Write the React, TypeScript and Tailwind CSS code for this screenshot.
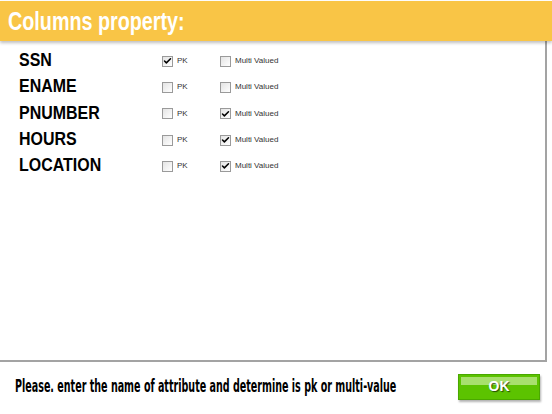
import { Check } from 'lucide-react';

type Column = { name: string; pk: boolean; multi: boolean };

const columns: Column[] = [
  { name: 'SSN', pk: true, multi: false },
  { name: 'ENAME', pk: false, multi: false },
  { name: 'PNUMBER', pk: false, multi: true },
  { name: 'HOURS', pk: false, multi: true },
  { name: 'LOCATION', pk: false, multi: true },
];

function Box({ checked }: { checked: boolean }) {
  return (
    <div className="w-[11px] h-[11px] border border-[#9a9a9a] bg-gradient-to-br from-[#e4e4e4] to-white flex items-center justify-center">
      {checked && <Check className="w-[10px] h-[10px] text-black" strokeWidth={4} />}
    </div>
  );
}

export default function App() {
  return (
    <div className="w-[552px] h-[414px] bg-white flex flex-col overflow-hidden font-['Liberation_Sans',Arial,sans-serif]">
      {/* Header */}
      <div className="mt-px h-[40px] shrink-0 bg-[#f9c546] flex items-center pl-[8px] shadow-[0_2px_3px_rgba(0,0,0,0.25)] relative z-10">
        <span className="inline-block origin-left scale-x-[0.79] whitespace-nowrap text-white font-bold text-[25px] leading-none">
          Columns property:
        </span>
      </div>

      {/* Columns panel */}
      <div className="h-[321px] shrink-0 w-[547px] border-r-2 border-b-2 border-[#a3a3a3] bg-white pt-[7px] pl-[19px] flex flex-col">
        {columns.map((c) => (
          <div key={c.name} className="h-[26.3px] flex items-center">
            <div className="w-[143px]">
              <span className="inline-block origin-left scale-x-[0.84] text-[19px] font-bold text-black leading-none whitespace-nowrap">
                {c.name}
              </span>
            </div>
            <div className="w-[58px] flex items-center gap-[4px]">
              <Box checked={c.pk} />
              <span className="text-[8px] text-[#333]">PK</span>
            </div>
            <div className="flex items-center gap-[4px]">
              <Box checked={c.multi} />
              <span className="text-[8px] text-[#333]">Multi Valued</span>
            </div>
          </div>
        ))}
      </div>

      {/* Footer */}
      <div className="flex-1 flex items-center pl-[15px] pr-[12px] pb-[3px]">
        <div className="w-[400px] shrink-0">
          <span className="inline-block origin-left scale-x-[0.59] whitespace-nowrap font-['DejaVu_Sans_Condensed','DejaVu_Sans',sans-serif] font-bold text-[18px] text-black leading-none">
            Please. enter the name of attribute and determine is pk or multi-value
          </span>
        </div>
        <button className="ml-auto w-[82px] h-[26px] bg-[#5cc300] border border-[#4aa800] shadow-[1px_2px_2px_rgba(0,0,0,0.3)] relative flex items-center justify-center">
          <div className="absolute top-[2px] left-[2px] right-[2px] h-[8px] bg-[#a8e06e]" />
          <span className="relative text-white font-bold text-[14px] [text-shadow:1px_1px_1px_rgba(0,0,0,0.6)]">OK</span>
        </button>
      </div>
    </div>
  );
}
